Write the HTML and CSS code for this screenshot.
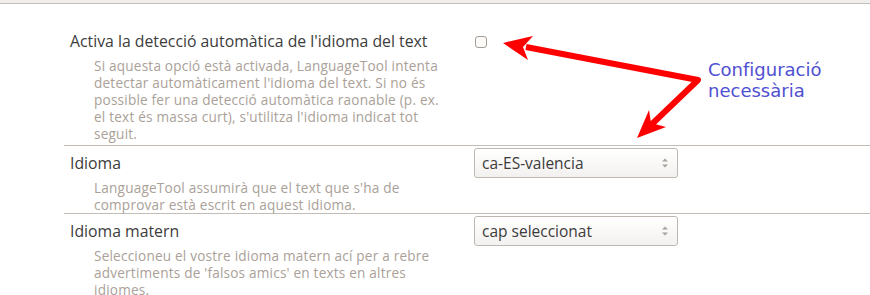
FILE: index.html
```html
<!DOCTYPE html>
<html lang="ca">
<head>
    <meta charset="UTF-8">
    <meta name="viewport" content="width=device-width, initial-scale=1.0">
    <title>Opcions de LanguageTool</title>
    <link rel="stylesheet" href="styles.css">
</head>
<body>
    <div class="topbar"></div>

    <div class="settings">
        <div class="row first">
            <div class="label">
                <div class="title">Activa la detecció automàtica de l'idioma del text</div>
                <div class="desc">Si aquesta opció està activada, LanguageTool intenta detectar automàticament l'idioma del text. Si no és possible fer una detecció automàtica raonable (p. ex. el text és massa curt), s'utilitza l'idioma indicat tot seguit.</div>
            </div>
            <div class="control">
                <input type="checkbox" class="check" id="auto-detect">
            </div>
        </div>

        <div class="row">
            <div class="label">
                <div class="title">Idioma</div>
                <div class="desc">LanguageTool assumirà que el text que s'ha de comprovar està escrit en aquest idioma.</div>
            </div>
            <div class="control">
                <div class="select-wrap">
                    <select id="language">
                        <option value="ca-ES-valencia">ca-ES-valencia</option>
                        <option value="ca-ES">ca-ES</option>
                    </select>
                    <svg class="spin" width="8" height="12" viewBox="0 0 8 12"><path d="M1 4.5 L4 1.5 L7 4.5 Z M1 7.5 L4 10.5 L7 7.5 Z" fill="#a8a29c"/></svg>
                </div>
            </div>
        </div>

        <div class="row last">
            <div class="label">
                <div class="title">Idioma matern</div>
                <div class="desc">Seleccioneu el vostre idioma matern ací per a rebre advertiments de 'falsos amics' en texts en altres idiomes.</div>
            </div>
            <div class="control">
                <div class="select-wrap">
                    <select id="mother-tongue">
                        <option value="">cap seleccionat</option>
                        <option value="ca">ca</option>
                    </select>
                    <svg class="spin" width="8" height="12" viewBox="0 0 8 12"><path d="M1 4.5 L4 1.5 L7 4.5 Z M1 7.5 L4 10.5 L7 7.5 Z" fill="#a8a29c"/></svg>
                </div>
            </div>
        </div>
    </div>

    <!-- annotation drawn over the screenshot -->
    <svg class="arrows" width="870" height="295" viewBox="0 0 870 295">
        <polyline points="526,47 698,80 651,125" fill="none" stroke="#ff0000" stroke-width="6" stroke-linejoin="round"/>
        <polygon points="503,43 533,36 523,47 528,60" fill="#ff0000"/>
        <polygon points="637,138 649,110 651,123 666,127" fill="#ff0000"/>
    </svg>
    <div class="note">Configuració<br>necessària</div>
</body>
</html>
```

FILE: styles.css
```css
body {
    margin: 0;
    background: #ffffff;
    font-family: "Open Sans", "Noto Sans", sans-serif;
    color: #3c3c3c;
    position: relative;
    width: 870px;
}
.topbar {
    height: 3px;
    background: #f0eeec;
    border-bottom: 1px solid #c4bdb6;
}
.settings {
    margin-left: 64px;
}
.row {
    display: flex;
    align-items: flex-start;
    padding-top: 2px;
    border-bottom: 1px solid #c4bdb6;
}
.row.first {
    padding-top: 22px;
    padding-bottom: 3px;
}
.row.last {
    border-bottom: none;
    padding-bottom: 10px;
}
.label {
    width: 404px;
    padding-left: 6px;
    padding-top: 6px;
}
.title {
    font-size: 15.8px;
    line-height: 18px;
    white-space: nowrap;
}
.desc {
    margin-top: 7px;
    padding-left: 24px;
    width: 356px;
    font-size: 13.6px;
    line-height: 17px;
    letter-spacing: 0.2px;
    color: #aaa198;
}
.control {
    flex: 1;
}
.check {
    appearance: none;
    width: 12px;
    height: 12px;
    margin: 10px 0 0 1px;
    border: 1px solid #a59e97;
    border-radius: 3px;
    background: #fbfaf9;
}
.select-wrap {
    position: relative;
    width: 204px;
}
.select-wrap select {
    appearance: none;
    width: 204px;
    height: 30px;
    padding: 0 20px 0 7px;
    font-family: "Open Sans", "Noto Sans", sans-serif;
    font-size: 15.5px;
    color: #3c3c3c;
    border: 1px solid #bfb8b1;
    border-radius: 3px;
    background: linear-gradient(#ffffff, #f3f1ef);
}
.spin {
    position: absolute;
    right: 9px;
    top: 9px;
    pointer-events: none;
}
.arrows {
    position: absolute;
    left: 0;
    top: 0;
    pointer-events: none;
}
.note {
    position: absolute;
    left: 708px;
    top: 59px;
    font-family: "DejaVu Sans", sans-serif;
    font-size: 18px;
    line-height: 21px;
    color: #5050d2;
}
```
